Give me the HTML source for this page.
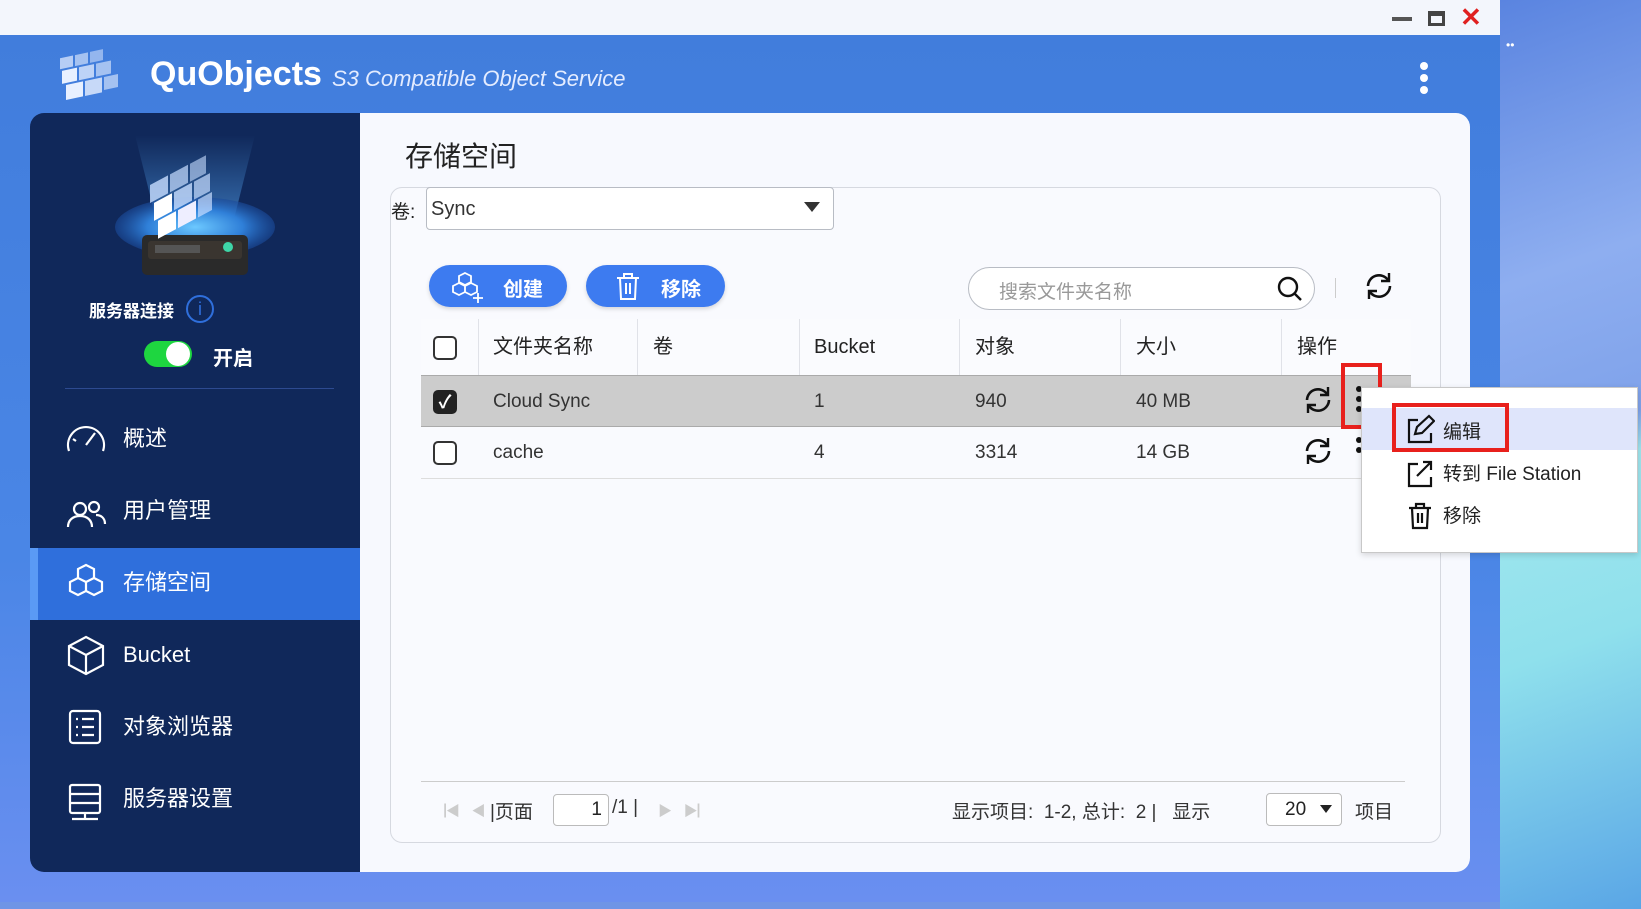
<!DOCTYPE html>
<html><head><meta charset="utf-8"><style>
*{margin:0;padding:0;box-sizing:border-box}
body{width:1641px;height:909px;overflow:hidden;position:relative;background:#6f95e6;font-family:"Liberation Sans","Noto Sans CJK SC",sans-serif;color:#222}
.a{position:absolute}
.desk{left:1500px;top:0;width:141px;height:909px;background:linear-gradient(160deg,#5a84e0 0%,#8eaef0 30%,#7fa2ea 48%,#9fe6ee 52%,#8fe0ec 70%,#5aa6e6 100%)}
.top{left:0;top:0;width:1500px;height:36px;background:#f3f6fc}
.hdr{left:0;top:35px;width:1500px;height:867px;background:linear-gradient(180deg,#417ddc 0%,#4a86e6 60%,#6a8ff0 100%)}
.side{left:30px;top:113px;width:330px;height:759px;background:#10285a;border-radius:14px 0 0 14px}
.main{left:360px;top:113px;width:1110px;height:759px;background:#f7f9fe;border-radius:0 14px 14px 0}
.card{left:390px;top:187px;width:1051px;height:656px;border:1px solid #d6d9e0;border-radius:12px;background:#f9fafe}
.nav{left:123px;color:#fff;font-size:22px;line-height:28px}
.btn{top:265px;height:42px;border-radius:21px;background:#3d7bf0;color:#fff;font-size:20px;font-weight:bold;box-shadow:0 2px 4px rgba(0,0,0,.15)}
.th{top:334px;font-size:20px;line-height:26px;color:#222}
.sep{top:319px;width:1px;height:56px;background:#e0e2e8}
.cb{width:24px;height:24px;border:2px solid #333;border-radius:5px;background:#fff}
.td{font-size:19px;line-height:24px;color:#333}
</style></head><body>
<div class="a desk"></div>
<div class="a top"></div>
<div class="a" style="left:1392px;top:17px;width:20px;height:4px;background:#555"></div>
<div class="a" style="left:1428px;top:11px;width:17px;height:15px;border:3px solid #444;border-top-width:5px"></div>
<div class="a" style="left:1460px;top:2px;color:#e02020;font-size:26px;font-weight:bold">✕</div>
<div class="a" style="left:1506px;top:38px;color:#fff;font-size:12px">••</div>
<div class="a hdr"></div>
<svg class="a" style="left:52px;top:44px" width="76" height="66" viewBox="0 0 76 66">
<g transform="skewY(-12) translate(4,14)" fill="#e8f0ff">
<rect x="4" y="2" width="13" height="11" opacity=".7"/><rect x="19" y="2" width="13" height="11" opacity=".6"/><rect x="34" y="2" width="13" height="11" opacity=".5"/>
<rect x="6" y="15" width="15" height="13"/><rect x="23" y="15" width="15" height="13" opacity=".75"/><rect x="40" y="15" width="15" height="13" opacity=".6"/>
<rect x="10" y="30" width="17" height="15"/><rect x="29" y="30" width="17" height="15" opacity=".8"/><rect x="48" y="30" width="14" height="13" opacity=".6"/>
</g></svg>
<div class="a" style="left:150px;top:55px;color:#fff;font-size:34px;font-weight:bold">QuObjects</div>
<div class="a" style="left:332px;top:66px;color:#e4ecff;font-size:22px;font-style:italic">S3 Compatible Object Service</div>
<div class="a" style="left:1420px;top:62px;width:8px;height:8px;border-radius:50%;background:#fff;box-shadow:0 12px 0 #fff,0 24px 0 #fff"></div>

<div class="a side"></div>
<svg class="a" style="left:110px;top:135px" width="170" height="150" viewBox="0 0 170 150">
<defs><radialGradient id="g" cx=".5" cy=".5" r=".5"><stop offset="0" stop-color="#6cc8ff"/><stop offset=".6" stop-color="#2f7fd8"/><stop offset="1" stop-color="#1a4a9a" stop-opacity=".6"/></radialGradient>
<linearGradient id="b" x1="0" y1="1" x2="0" y2="0"><stop offset="0" stop-color="#5ab0ff" stop-opacity=".6"/><stop offset="1" stop-color="#5ab0ff" stop-opacity="0"/></linearGradient></defs>
<polygon points="25,0 145,0 120,100 50,100" fill="url(#b)"/>
<ellipse cx="85" cy="92" rx="80" ry="30" fill="url(#g)"/>
<rect x="32" y="100" width="106" height="40" rx="5" fill="#2a2a2a"/>
<rect x="38" y="106" width="94" height="18" rx="3" fill="#3a3530"/>
<rect x="45" y="110" width="45" height="8" fill="#555"/>
<circle cx="118" cy="112" r="5" fill="#3ed6a8"/>
<g transform="translate(40,10) skewY(-28)" fill="#c8ddff"><rect x="0" y="40" width="18" height="18" opacity=".8"/><rect x="20" y="40" width="18" height="18" opacity=".7"/><rect x="40" y="40" width="16" height="18" opacity=".6"/>
<rect x="4" y="60" width="18" height="18" fill="#fff"/><rect x="24" y="60" width="18" height="18" opacity=".8"/><rect x="44" y="60" width="16" height="18" opacity=".7"/>
<rect x="8" y="80" width="18" height="18" fill="#fff"/><rect x="28" y="80" width="18" height="18" fill="#eef"/><rect x="48" y="80" width="14" height="18" opacity=".7"/></g>
</svg>
<div class="a" style="left:89px;top:297px;color:#fff;font-size:17px;font-weight:bold">服务器连接</div>
<div class="a" style="left:186px;top:295px;width:28px;height:28px;border:2px solid #2f6fdc;border-radius:50%;color:#2f6fdc;text-align:center;font-size:18px;line-height:24px">i</div>
<div class="a" style="left:144px;top:341px;width:48px;height:26px;border-radius:13px;background:#1ed640"></div>
<div class="a" style="left:166px;top:342px;width:24px;height:24px;border-radius:50%;background:#fff"></div>
<div class="a" style="left:213px;top:342px;color:#fff;font-size:20px;font-weight:bold">开启</div>
<div class="a" style="left:65px;top:388px;width:269px;height:1px;background:#2d4a90"></div>
<div class="a" style="left:30px;top:548px;width:330px;height:72px;background:#2f6fdc"></div>
<div class="a" style="left:30px;top:548px;width:8px;height:72px;background:#5a9af5"></div>
<svg class="a" style="left:64px;top:419px" width="44" height="410" viewBox="0 0 44 410" fill="none" stroke="#fff" stroke-width="2.2">
<path d="M5 32 A18 18 0 1 1 39 32 M22 26 L31 14 M9 20l3 2"/>
<circle cx="16" cy="90" r="6"/><path d="M4 108c0-7 5-11 12-11s12 4 12 11"/><circle cx="30" cy="88" r="5"/><path d="M32 96c5 0 9 3 9 9"/>
<path d="M22 146l8 4v9l-8 4-8-4v-9zM14 159l8 4v9l-8 4-8-4v-9zM30 159l8 4v9l-8 4-8-4v-9z"/>
<g transform="translate(0,8)"><path d="M22 210l17 9v19l-17 9-17-9v-19zM5 219l17 9 17-9M22 228v19"/></g>
<g transform="translate(0,12)"><rect x="6" y="280" width="30" height="32" rx="3"/><path d="M12 288h2M18 288h12M12 296h2M18 296h12M12 304h2M18 304h12"/></g>
<g transform="translate(0,20)"><rect x="6" y="346" width="30" height="28" rx="2"/><path d="M6 355h30M6 364h30M21 374v6M8 380h26"/></g>
</svg>
<div class="a nav" style="top:425px">概述</div>
<div class="a nav" style="top:497px">用户管理</div>
<div class="a nav" style="top:569px">存储空间</div>
<div class="a nav" style="top:641px">Bucket</div>
<div class="a nav" style="top:713px">对象浏览器</div>
<div class="a nav" style="top:785px">服务器设置</div>

<div class="a main"></div>
<div class="a" style="left:405px;top:135px;font-size:28px;color:#222">存储空间</div>
<div class="a card"></div>
<div class="a" style="left:391px;top:197px;font-size:19px">卷:</div>
<div class="a" style="left:426px;top:187px;width:408px;height:43px;border:1px solid #b8bcc4;border-radius:4px;background:#fff;font-size:20px;padding:10px 4px;color:#333">Sync</div>
<div class="a" style="left:804px;top:202px;border-left:8px solid transparent;border-right:8px solid transparent;border-top:10px solid #333"></div>

<div class="a btn" style="left:429px;width:138px"><svg class="a" style="left:22px;top:6px" width="38" height="32" viewBox="0 0 38 32" fill="none" stroke="#fff" stroke-width="1.8"><path d="M14 2l6 3v6l-6 3-6-3V5zM8 12l6 3v6l-6 3-6-3v-6zM20 12l6 3v6l-6 3-6-3v-6zM27 22v10M22 27h10"/></svg><span class="a" style="left:74px;top:8px">创建</span></div>
<div class="a btn" style="left:586px;width:139px"><svg class="a" style="left:28px;top:6px" width="28" height="30" viewBox="0 0 28 30" fill="none" stroke="#fff" stroke-width="2"><path d="M3 7h22M10 7V3h8v4M6 7l1 21h14l1-21M12 12v11M16 12v11"/></svg><span class="a" style="left:75px;top:8px">移除</span></div>

<div class="a" style="left:968px;top:267px;width:347px;height:43px;border:1px solid #b8bcc4;border-radius:22px;background:#fff;font-size:19px;color:#999;padding:9px 30px">搜索文件夹名称</div>
<svg class="a" style="left:1276px;top:275px" width="28" height="28" viewBox="0 0 28 28" fill="none" stroke="#111" stroke-width="2.4"><circle cx="12" cy="12" r="9"/><path d="M19 19l6 6"/></svg>
<div class="a" style="left:1335px;top:278px;width:1px;height:20px;background:#ccc"></div>
<svg class="a" style="left:1362px;top:270px" width="34" height="32" viewBox="0 0 34 32" fill="none" stroke="#111" stroke-width="2.6"><path d="M6 16a11 11 0 0 1 20-6M28 16a11 11 0 0 1-20 6"/><path d="M27 3v8h-8M7 29v-8h8" stroke-width="2.4"/></svg>

<div class="a" style="left:421px;top:319px;width:990px;height:56px;background:#fafbfe"></div>
<div class="a sep" style="left:478px"></div><div class="a sep" style="left:637px"></div><div class="a sep" style="left:799px"></div><div class="a sep" style="left:959px"></div><div class="a sep" style="left:1120px"></div><div class="a sep" style="left:1281px"></div>
<div class="a cb" style="left:433px;top:336px"></div>
<div class="a th" style="left:493px">文件夹名称</div><div class="a th" style="left:653px">卷</div><div class="a th" style="left:814px">Bucket</div><div class="a th" style="left:975px">对象</div><div class="a th" style="left:1136px">大小</div><div class="a th" style="left:1297px">操作</div>
<div class="a" style="left:421px;top:375px;width:990px;height:52px;background:#cccccc;border-top:1px solid #aaa;border-bottom:1px solid #aaa"></div>
<div class="a" style="left:421px;top:478px;width:990px;height:1px;background:#ddd"></div>
<div class="a cb" style="left:433px;top:390px;background:#222;border-color:#222;color:#fff;font-size:18px;line-height:20px;text-align:center;font-weight:bold">✓</div>
<div class="a cb" style="left:433px;top:441px"></div>
<div class="a td" style="left:493px;top:390px">Cloud Sync</div><div class="a td" style="left:814px;top:390px">1</div><div class="a td" style="left:975px;top:390px">940</div><div class="a td" style="left:1136px;top:390px">40 MB</div>
<div class="a td" style="left:493px;top:441px">cache</div><div class="a td" style="left:814px;top:441px">4</div><div class="a td" style="left:975px;top:441px">3314</div><div class="a td" style="left:1136px;top:441px">14 GB</div>
<svg class="a" style="left:1301px;top:384px" width="34" height="32" viewBox="0 0 34 32" fill="none" stroke="#111" stroke-width="2.6"><path d="M6 16a11 11 0 0 1 20-6M28 16a11 11 0 0 1-20 6"/><path d="M27 3v8h-8M7 29v-8h8" stroke-width="2.4"/></svg>
<svg class="a" style="left:1301px;top:435px" width="34" height="32" viewBox="0 0 34 32" fill="none" stroke="#111" stroke-width="2.6"><path d="M6 16a11 11 0 0 1 20-6M28 16a11 11 0 0 1-20 6"/><path d="M27 3v8h-8M7 29v-8h8" stroke-width="2.4"/></svg>
<div class="a" style="left:1356px;top:386px;width:6px;height:6px;border-radius:50%;background:#111;box-shadow:0 10px 0 #111,0 20px 0 #111"></div>
<div class="a" style="left:1356px;top:437px;width:6px;height:6px;border-radius:50%;background:#111;box-shadow:0 10px 0 #111"></div>
<div class="a" style="left:1341px;top:363px;width:41px;height:66px;border:4px solid #e8201c"></div>

<div class="a" style="left:421px;top:781px;width:984px;height:1px;background:#ccc"></div>
<div class="a" style="left:432px;top:801px;color:#ccc;font-size:14px">▕◀ &nbsp; ◀</div>
<div class="a" style="left:490px;top:797px;font-size:19px;color:#333">|页面</div>
<div class="a" style="left:553px;top:794px;width:56px;height:32px;border:1px solid #bbb;border-radius:4px;background:#fff;text-align:right;padding:4px 6px;font-size:19px">1</div>
<div class="a" style="left:612px;top:797px;font-size:19px;color:#333">/1 |</div>
<div class="a" style="left:658px;top:801px;color:#ccc;font-size:14px">▶ &nbsp; ▶▏</div>
<div class="a" style="left:952px;top:797px;font-size:19px;color:#333">显示项目:&nbsp; 1-2, 总计:&nbsp; 2 |&nbsp;&nbsp; 显示</div>
<div class="a" style="left:1266px;top:793px;width:76px;height:33px;border:1px solid #bbb;border-radius:4px;background:#fff;font-size:19px;padding:5px 18px">20</div>
<div class="a" style="left:1320px;top:805px;border-left:6px solid transparent;border-right:6px solid transparent;border-top:8px solid #222"></div>
<div class="a" style="left:1355px;top:797px;font-size:19px;color:#333">项目</div>

<div class="a" style="left:1361px;top:387px;width:277px;height:166px;background:#fff;border:1px solid #c8c8c8;box-shadow:0 2px 6px rgba(0,0,0,.15)"></div>
<div class="a" style="left:1362px;top:408px;width:275px;height:42px;background:#dfe5fb"></div>
<svg class="a" style="left:1405px;top:414px" width="30" height="120" viewBox="0 0 30 120" fill="none" stroke="#111" stroke-width="2.2">
<path d="M13 6H4v22h22v-9M10 20l2-7 12-11 5 5-12 12z"/>
<path d="M13 50H4v22h22v-9M12 62l14-14M18 48h8v8"/>
<path d="M4 94h22M11 94v-4h8v4M7 94l1 20h14l1-20M13 99v10M17 99v10"/>
</svg>
<div class="a" style="left:1443px;top:417px;font-size:19px;color:#222">编辑</div>
<div class="a" style="left:1443px;top:459px;font-size:19px;color:#222">转到 File Station</div>
<div class="a" style="left:1443px;top:501px;font-size:19px;color:#222">移除</div>
<div class="a" style="left:1392px;top:403px;width:117px;height:49px;border:4px solid #e8201c"></div>
</body></html>
